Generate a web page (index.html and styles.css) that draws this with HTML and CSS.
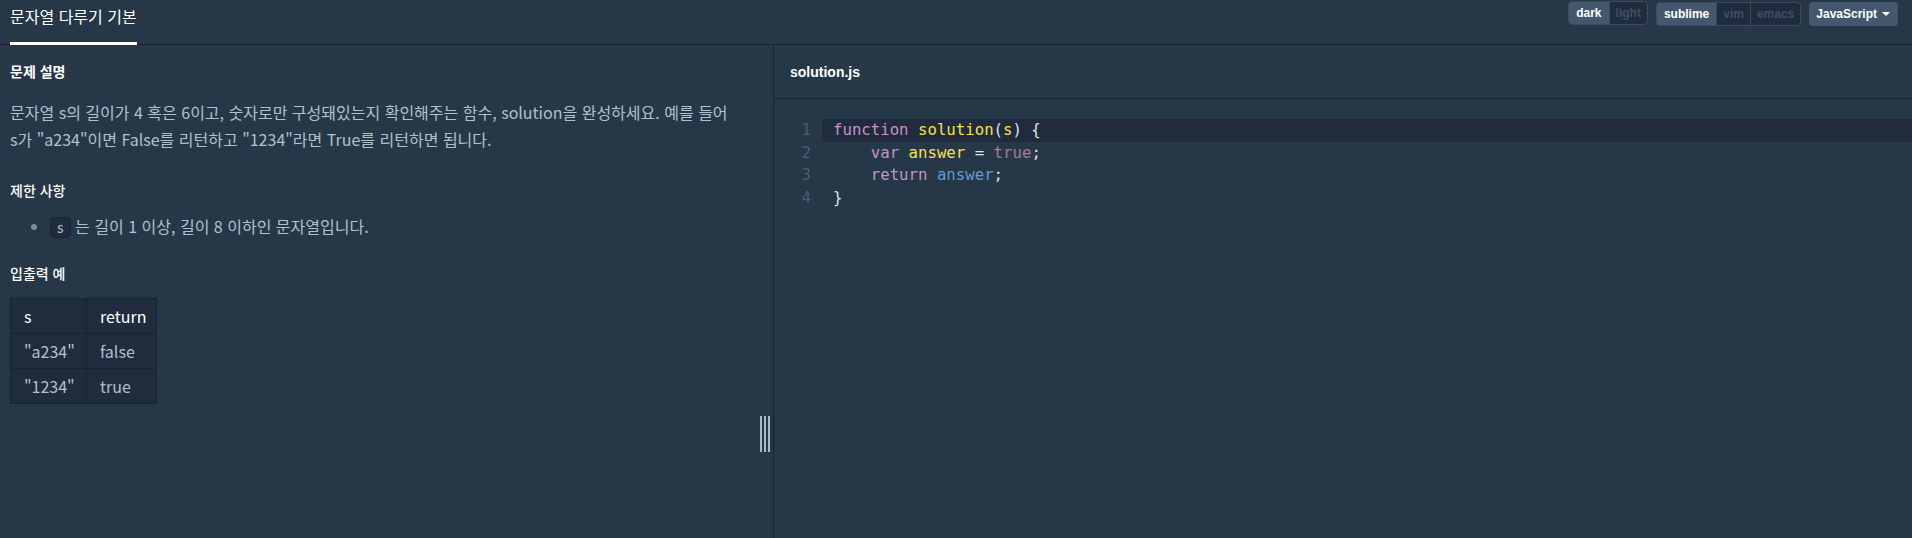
FILE: index.html
```html
<!DOCTYPE html>
<html lang="ko">
<head>
<meta charset="utf-8">
<title>문자열 다루기 기본</title>
<link rel="stylesheet" href="styles.css">
</head>
<body>
<header class="topbar">
  <div class="tab">문자열 다루기 기본</div>
  <div class="controls">
    <div class="seg">
      <span class="seg-item active">dark</span>
      <span class="seg-item">light</span>
    </div>
    <div class="seg">
      <span class="seg-item active">sublime</span>
      <span class="seg-item">vim</span>
      <span class="seg-item">emacs</span>
    </div>
    <div class="lang">JavaScript <span class="caret"></span></div>
  </div>
</header>
<main class="main">
  <section class="desc">
    <h5 class="h-first">문제 설명</h5>
    <p class="para">문자열 s의 길이가 4 혹은 6이고, 숫자로만 구성돼있는지 확인해주는 함수, solution을 완성하세요. 예를 들어<br>s가 "a234"이면 False를 리턴하고 "1234"라면 True를 리턴하면 됩니다.</p>
    <h5 class="h-sec">제한 사항</h5>
    <ul class="rules">
      <li><code class="chip">s</code> 는 길이 1 이상, 길이 8 이하인 문자열입니다.</li>
    </ul>
    <h5 class="h-sec h-io">입출력 예</h5>
    <table class="io">
      <thead><tr><th class="c1">s</th><th class="c2">return</th></tr></thead>
      <tbody>
        <tr><td>"a234"</td><td>false</td></tr>
        <tr><td>"1234"</td><td>true</td></tr>
      </tbody>
    </table>
    <div class="handle"><i></i><i></i><i></i></div>
  </section>
  <section class="editor">
    <div class="ed-head">solution.js</div>
    <div class="code">
      <div class="line active"><span class="ln">1</span><span class="src"><span class="kw">function</span> <span class="fn">solution</span>(<span class="fn">s</span>) {</span></div>
      <div class="line"><span class="ln">2</span><span class="src">    <span class="kw">var</span> <span class="fn">answer</span> = <span class="bool">true</span>;</span></div>
      <div class="line"><span class="ln">3</span><span class="src">    <span class="kw">return</span> <span class="var">answer</span>;</span></div>
      <div class="line"><span class="ln">4</span><span class="src">}</span></div>
    </div>
  </section>
</main>
</body>
</html>
```

FILE: styles.css
```css
* { box-sizing: border-box; }
html, body {
  margin: 0;
  padding: 0;
  height: 100%;
  background: #263747;
  overflow: hidden;
}
body {
  font-family: "Noto Sans CJK KR", "Noto Sans", sans-serif;
  color: #b2c0cc;
}
.topbar {
  display: flex;
  justify-content: space-between;
  align-items: flex-start;
  height: 45px;
  border-bottom: 1px solid #172334;
}
.tab {
  margin-left: 10px;
  height: 45px;
  padding-top: 3px;
  font-size: 16px;
  line-height: 26px;
  color: #fff;
  border-bottom: 3px solid #fff;
  position: relative;
  z-index: 1;
}
.controls {
  display: flex;
  align-items: flex-start;
  padding-top: 1px;
  padding-right: 14px;
  font-family: "Liberation Sans", Arial, sans-serif;
  font-size: 12px;
  font-weight: bold;
}
.seg {
  display: flex;
  height: 24px;
  margin-right: 8px;
  border: 1px solid #3a4b5e;
  border-radius: 4px;
  overflow: hidden;
  background: #202b3d;
}
.seg + .seg { margin-top: 1px; }
.seg-item {
  display: flex;
  align-items: center;
  padding: 0 6px;
  color: #3e4f63;
  border-left: 1px solid #3a4b5e;
}
.seg-item:first-child { border-left: 0; }
.seg-item.active {
  background: #44576c;
  color: #fff;
  padding: 0 7px;
}
.lang {
  display: flex;
  align-items: center;
  height: 24px;
  margin-top: 1px;
  padding: 0 8px 0 7px;
  background: #44576c;
  color: #fff;
  border-radius: 4px;
}
.caret {
  display: inline-block;
  margin-left: 5px;
  width: 0;
  height: 0;
  border-left: 4px solid transparent;
  border-right: 4px solid transparent;
  border-top: 4px solid #fff;
}
.main {
  display: flex;
  height: calc(100% - 45px);
}
.desc {
  position: relative;
  width: 774px;
  flex: none;
  padding: 0 10px;
  border-right: 1px solid #172334;
}
h5 {
  margin: 0;
  font-size: 14px;
  line-height: 21px;
  color: #fff;
  font-weight: 700;
}
.h-first { margin-top: 16px; }
.para {
  margin: 17px 0 0;
  font-size: 16px;
  line-height: 27.3px;
}
.h-sec {
  margin-top: 26px;
  font-weight: 500;
}
.rules {
  margin: 12px 0 0;
  padding-left: 40px;
  font-size: 16px;
  line-height: 27.2px;
}
.rules li::marker { color: #7d8d9c; }
.chip {
  display: inline-block;
  font-family: "Noto Sans CJK KR", "Noto Sans", sans-serif;
  font-size: 14px;
  line-height: 19px;
  padding: 0 6px;
  color: #b2c0cc;
  background: #202b3d;
  border: 1px solid #1a2536;
  border-radius: 4px;
}
.h-io { margin-top: 23px; }
.io {
  margin-top: 14px;
  border-collapse: collapse;
  background: #202b3d;
  font-size: 16px;
  line-height: 22px;
}
.io th, .io td {
  border: 1px solid #172334;
  padding: 6px 10px 6px 13px;
  text-align: left;
  font-weight: 400;
  height: 34.5px;
}
.io th { color: #fff; }
.io td { color: #b2c0cc; }
.io .c1 { width: 76px; }
.io .c2 { width: 70px; }
.handle {
  position: absolute;
  left: 760px;
  top: 371px;
  display: flex;
  gap: 2px;
}
.handle i {
  display: block;
  width: 2px;
  height: 36px;
  background: #a9b8c6;
}
.editor {
  flex: 1;
}
.ed-head {
  height: 54px;
  display: flex;
  align-items: center;
  padding-left: 16px;
  font-family: "Liberation Sans", Arial, sans-serif;
  font-size: 14px;
  font-weight: bold;
  color: #fff;
  border-bottom: 1px solid #172334;
}
.code {
  padding-top: 20px;
  font-family: "DejaVu Sans Mono", monospace;
  font-size: 15.7px;
  line-height: 22.6px;
  color: #dce3ea;
}
.line {
  display: flex;
  white-space: pre;
}
.ln {
  width: 48px;
  flex: none;
  text-align: right;
  padding-right: 11px;
  color: #4c5d70;
}
.src {
  flex: 1;
  padding-left: 11px;
}
.line.active .src { background: #202b3d; }
.kw { color: #c594c5; }
.fn { color: #fae04f; }
.bool { color: #a77a96; }
.var { color: #6699d6; }
```
